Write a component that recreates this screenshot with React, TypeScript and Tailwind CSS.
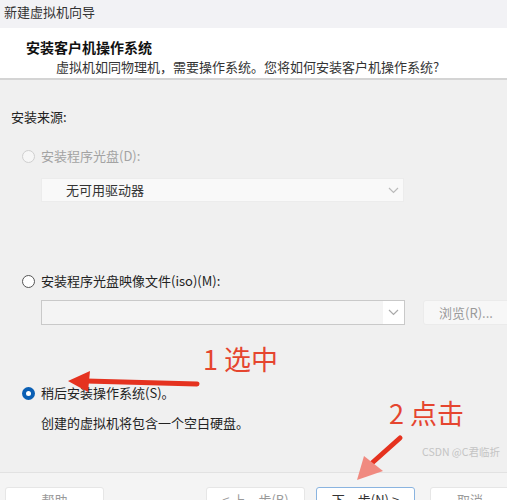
import React from "react";

const font = { fontFamily: '"Noto Sans CJK SC", "Noto Sans", sans-serif' };

function Chevron({ color }: { color: string }) {
  return (
    <svg width="11" height="7" viewBox="0 0 11 7" fill="none">
      <path d="M1 1l4.5 4.5L10 1" stroke={color} strokeWidth="1.2" />
    </svg>
  );
}

export default function App() {
  return (
    <div
      className="relative w-[507px] h-[500px] overflow-hidden bg-[#f0f0f0] text-[13px] text-[#222] flex flex-col"
      style={font}
    >
      {/* title bar */}
      <div className="h-[28px] shrink-0 bg-[#f2f2f5] flex items-center pl-[4px] text-[#333] leading-none pb-[6px]">
        新建虚拟机向导
      </div>
      {/* header */}
      <div className="h-[52px] shrink-0 bg-white border-b-2 border-[#d4d4d4] pt-[9px]">
        <div className="pl-[26px] leading-[20px] font-bold text-[14px] text-[#111]">安装客户机操作系统</div>
        <div className="pl-[56px] leading-[20px] text-[#333]">虚拟机如同物理机，需要操作系统。您将如何安装客户机操作系统?</div>
      </div>
      {/* body */}
      <div className="flex-1 flex flex-col pl-[11px] pt-[27px]">
        <div className="leading-[20px] text-[#222]">安装来源:</div>
        <div className="mt-[19px] flex items-center gap-[6px] pl-[11px] leading-[20px] text-[#a3a3a3]">
          <span className="w-[13px] h-[13px] rounded-full border border-[#cfcfcf] bg-[#f6f6f6]" />
          <span>安装程序光盘(D):</span>
        </div>
        <div className="mt-[12px] ml-[30px] w-[363px] h-[24px] bg-[#f9f9f9] border border-[#ececec] flex items-center justify-between pl-[24px] pr-[4px]">
          <span className="text-[#333]">无可用驱动器</span>
          <Chevron color="#bbbbbb" />
        </div>
        <div className="mt-[69px] flex items-center gap-[6px] pl-[11px] leading-[20px] text-[#222]">
          <span className="w-[13px] h-[13px] rounded-full border border-[#555] bg-white" />
          <span>安装程序光盘映像文件(iso)(M):</span>
        </div>
        <div className="mt-[9px] flex items-center">
          <div className="shrink-0 ml-[30px] w-[364px] h-[25px] bg-white border border-[#c9c9c9] flex">
            <div className="flex-1 bg-[#f4f4f4]" />
            <div className="w-[21px] flex items-center justify-center">
              <Chevron color="#aaaaaa" />
            </div>
          </div>
          <div className="shrink-0 ml-[18px] w-[90px] h-[25px] bg-[#f7f7f7] border border-[#ebebeb] rounded-[3px] flex items-center pl-[15px] text-[#9a9a9a] whitespace-nowrap">
            浏览(R)...
          </div>
        </div>
        <div className="mt-[58px] flex items-center gap-[6px] pl-[11px] leading-[20px] text-[#222]">
          <span className="w-[13px] h-[13px] rounded-full bg-[#0a5fb4] flex items-center justify-center">
            <span className="w-[5px] h-[5px] rounded-full bg-white" />
          </span>
          <span>稍后安装操作系统(S)。</span>
        </div>
        <div className="mt-[10px] pl-[30px] leading-[20px] text-[#222]">创建的虚拟机将包含一个空白硬盘。</div>
      </div>
      {/* footer */}
      <div className="h-[28px] shrink-0 bg-[#f4f4f4] border-t border-[#e2e2e2] relative">
        <div className="flex items-start pt-[14px] pl-[5px] gap-0">
          <div className="shrink-0 w-[99px] h-[26px] bg-white border border-[#e6e6e6] rounded-[3px] flex justify-center pt-[2px] text-[#9a9a9a]">帮助</div>
          <div className="shrink-0 ml-[102px] w-[99px] h-[26px] bg-white border border-[#e6e6e6] rounded-[3px] flex justify-center pt-[2px] text-[#9a9a9a]">&lt; 上一步(B)</div>
          <div className="shrink-0 ml-[11px] w-[99px] h-[26px] bg-white border border-[#8ab4e0] rounded-[3px] flex justify-center pt-[2px] text-[#333]">下一步(N) &gt;</div>
          <div className="shrink-0 ml-[15px] w-[80px] h-[26px] bg-white border border-[#e6e6e6] rounded-[3px] flex justify-center pt-[2px] text-[#9a9a9a]">取消</div>
        </div>
      </div>

      {/* annotations */}
      <div className="absolute left-[203px] top-[342px] text-[27px] leading-[34px] text-[#e5452f] whitespace-nowrap">1 选中</div>
      <div className="absolute left-[389px] top-[396px] text-[27px] leading-[34px] text-[#e5452f] whitespace-nowrap">2 点击</div>
      <div className="absolute left-[422px] top-[445px] text-[10.5px] leading-[14px] text-[#c4c4c4] whitespace-nowrap">CSDN @C君临折</div>
      <svg className="absolute left-0 top-0" width="507" height="500" viewBox="0 0 507 500">
        <line x1="197" y1="384" x2="86" y2="381" stroke="#e5321f" strokeWidth="5" strokeLinecap="round" />
        <polygon points="68,381 90,371 88,392" fill="#e5321f" />
        <line x1="400" y1="438" x2="372" y2="463" stroke="#e5321f" strokeWidth="5" strokeLinecap="round" />
        <polygon points="357,480 364,456 383,471" fill="#f08a80" />
      </svg>
    </div>
  );
}
